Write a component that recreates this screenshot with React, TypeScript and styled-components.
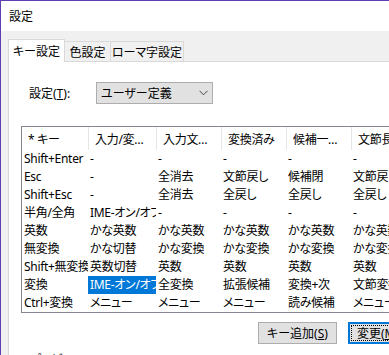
import React from "react";
import styled, { createGlobalStyle } from "styled-components";

const Global = createGlobalStyle`
  html, body { margin: 0; padding: 0; background: #f0f0f0; overflow: hidden; }
  body {
    font-family: "Noto Sans", "Noto Sans CJK JP", sans-serif;
    font-size: 12px;
    color: #000;
  }
`;

const Window = styled.div`
  width: 389px;
  height: 355px;
  box-sizing: border-box;
  border-top: 1px solid #5d3fb2;
  border-left: 1px solid #5d3fb2;
  background: #f0f0f0;
  display: flex;
  flex-direction: column;
  overflow: hidden;
  font-feature-settings: "palt";
`;

const TitleBar = styled.div`
  flex: none;
  height: 30px;
  background: #fff;
  display: flex;
  align-items: center;
  padding-left: 8px;
`;

const Body = styled.div`
  flex: 1;
  display: flex;
  flex-direction: column;
  padding: 8px 0 0 7px;
  min-height: 0;
`;

const TabStrip = styled.div`
  flex: none;
  height: 22px;
  display: flex;
  align-items: flex-end;
`;

const Tab = styled.div<{ $active?: boolean; $w: number }>`
  box-sizing: border-box;
  width: ${(p) => p.$w}px;
  height: ${(p) => (p.$active ? 23 : 20)}px;
  margin-bottom: ${(p) => (p.$active ? -1 : 0)}px;
  position: relative;
  z-index: ${(p) => (p.$active ? 1 : 0)};
  background: ${(p) => (p.$active ? "#fff" : "#f0f0f0")};
  border: 1px solid #d9d9d9;
  border-bottom: none;
  border-left: ${(p) => (p.$active ? "1px solid #d9d9d9" : "none")};
  display: flex;
  align-items: center;
  justify-content: center;
  white-space: nowrap;
`;

const Panel = styled.div`
  flex: 1;
  background: #fff;
  border-top: 1px solid #d9d9d9;
  border-left: 1px solid #d9d9d9;
  padding: 20px 0 0 12px;
  display: flex;
  flex-direction: column;
  min-height: 0;
`;

const SettingRow = styled.div`
  display: flex;
  align-items: center;
  height: 22px;
  padding-left: 8px;
`;

const Label = styled.span`
  width: 67px;
  white-space: nowrap;
  u { text-decoration: underline; text-underline-offset: 1px; }
`;

const Select = styled.div`
  box-sizing: border-box;
  width: 117px;
  height: 22px;
  border: 1px solid #adadad;
  background: #e1e1e1;
  display: flex;
  align-items: center;
  justify-content: space-between;
  padding: 0 4px 0 4px;
`;

const Table = styled.div`
  margin-top: 22px;
  width: 461px;
  box-sizing: border-box;
  border: 1px solid #828790;
  background: #fff;
  letter-spacing: -0.3px;
`;

const cols = "66px 68px 65px 65px 65px 65px 65px";

const HeaderRow = styled.div`
  display: grid;
  grid-template-columns: ${cols};
  height: 23px;
`;

const HeaderCell = styled.div<{ $first?: boolean }>`
  box-sizing: border-box;
  border-left: ${(p) => (p.$first ? "none" : "1px solid #e5e5e5")};
  padding: 0 6px;
  display: flex;
  align-items: center;
  overflow: hidden;
  white-space: nowrap;
  min-width: 0;
  span {
    overflow: hidden;
    text-overflow: ellipsis;
    white-space: nowrap;
  }
`;

const Row = styled.div`
  display: grid;
  grid-template-columns: ${cols};
  height: 18px;
  line-height: 18px;
`;

const Cell = styled.div<{ $selected?: boolean }>`
  padding-left: 2px;
  white-space: nowrap;
  overflow: hidden;
  min-width: 0;
  background: ${(p) => (p.$selected ? "#0078d7" : "transparent")};
  color: ${(p) => (p.$selected ? "#fff" : "#000")};
`;

const ButtonRow = styled.div`
  display: flex;
  gap: 11px;
  margin-top: 9px;
  padding-left: 237px;
`;

const Button = styled.div<{ $default?: boolean }>`
  box-sizing: border-box;
  flex: none;
  height: 22px;
  min-width: 77px;
  padding: 0 ${(p) => (p.$default ? 7 : 8)}px;
  border: ${(p) => (p.$default ? "2px solid #0078d7" : "1px solid #adadad")};
  background: #e1e1e1;
  display: flex;
  align-items: center;
  justify-content: ${(p) => (p.$default ? "flex-start" : "center")};
  white-space: nowrap;
  position: relative;
  u { text-decoration: underline; text-underline-offset: 1px; }
  &::after {
    content: "";
    display: ${(p) => (p.$default ? "block" : "none")};
    position: absolute;
    inset: 1px;
    border: 1px dotted #000;
  }
`;

const GroupLabel = styled.div`
  margin-top: 7px;
  padding-left: 9px;
  line-height: 18px;
  white-space: nowrap;
`;

const headers = ["* キー", "入力/変換なし", "入力文字なし", "変換済み", "候補一覧表示中", "文節長変更中", ""];

const rows: string[][] = [
  ["Shift+Enter", "-", "-", "-", "-", "-", ""],
  ["Esc", "-", "全消去", "文節戻し", "候補閉", "文節戻し", ""],
  ["Shift+Esc", "-", "全消去", "全戻し", "全戻し", "全戻し", ""],
  ["半角/全角", "IME-オン/オフ", "-", "-", "-", "-", ""],
  ["英数", "かな英数", "かな英数", "かな英数", "かな英数", "かな英数", ""],
  ["無変換", "かな切替", "かな変換", "かな変換", "かな変換", "かな変換", ""],
  ["Shift+無変換", "英数切替", "英数", "英数", "英数", "英数", ""],
  ["変換", "IME-オン/オフ", "全変換", "拡張候補", "変換+次", "文節変換", ""],
  ["Ctrl+変換", "メニュー", "メニュー", "メニュー", "読み候補", "メニュー", ""],
];

export default function App() {
  return (
    <>
      <Global />
      <Window>
        <TitleBar>設定</TitleBar>
        <Body>
          <TabStrip>
            <Tab $active $w={57}>キー設定</Tab>
            <Tab $w={46}>色設定</Tab>
            <Tab $w={73}>ローマ字設定</Tab>
          </TabStrip>
          <Panel>
            <SettingRow>
              <Label>
                設定(<u>T</u>):
              </Label>
              <Select>
                <span>ユーザー定義</span>
                <svg width="9" height="6" viewBox="0 0 9 6">
                  <polyline points="0.5,0.8 4.5,4.8 8.5,0.8" fill="none" stroke="#444" strokeWidth="1" />
                </svg>
              </Select>
            </SettingRow>
            <Table>
              <HeaderRow>
                {headers.map((h, i) => (
                  <HeaderCell key={i} $first={i === 0}>
                    <span>{h}</span>
                  </HeaderCell>
                ))}
              </HeaderRow>
              {rows.map((r, ri) => (
                <Row key={ri}>
                  {r.map((c, ci) => (
                    <Cell key={ci} $selected={ri === 7 && ci === 1}>
                      {c}
                    </Cell>
                  ))}
                </Row>
              ))}
            </Table>
            <ButtonRow>
              <Button>
                キー追加(<u>S</u>)
              </Button>
              <Button $default>
                変更(<u>M</u>)
              </Button>
            </ButtonRow>
            <GroupLabel>プレビュー</GroupLabel>
          </Panel>
        </Body>
      </Window>
    </>
  );
}
